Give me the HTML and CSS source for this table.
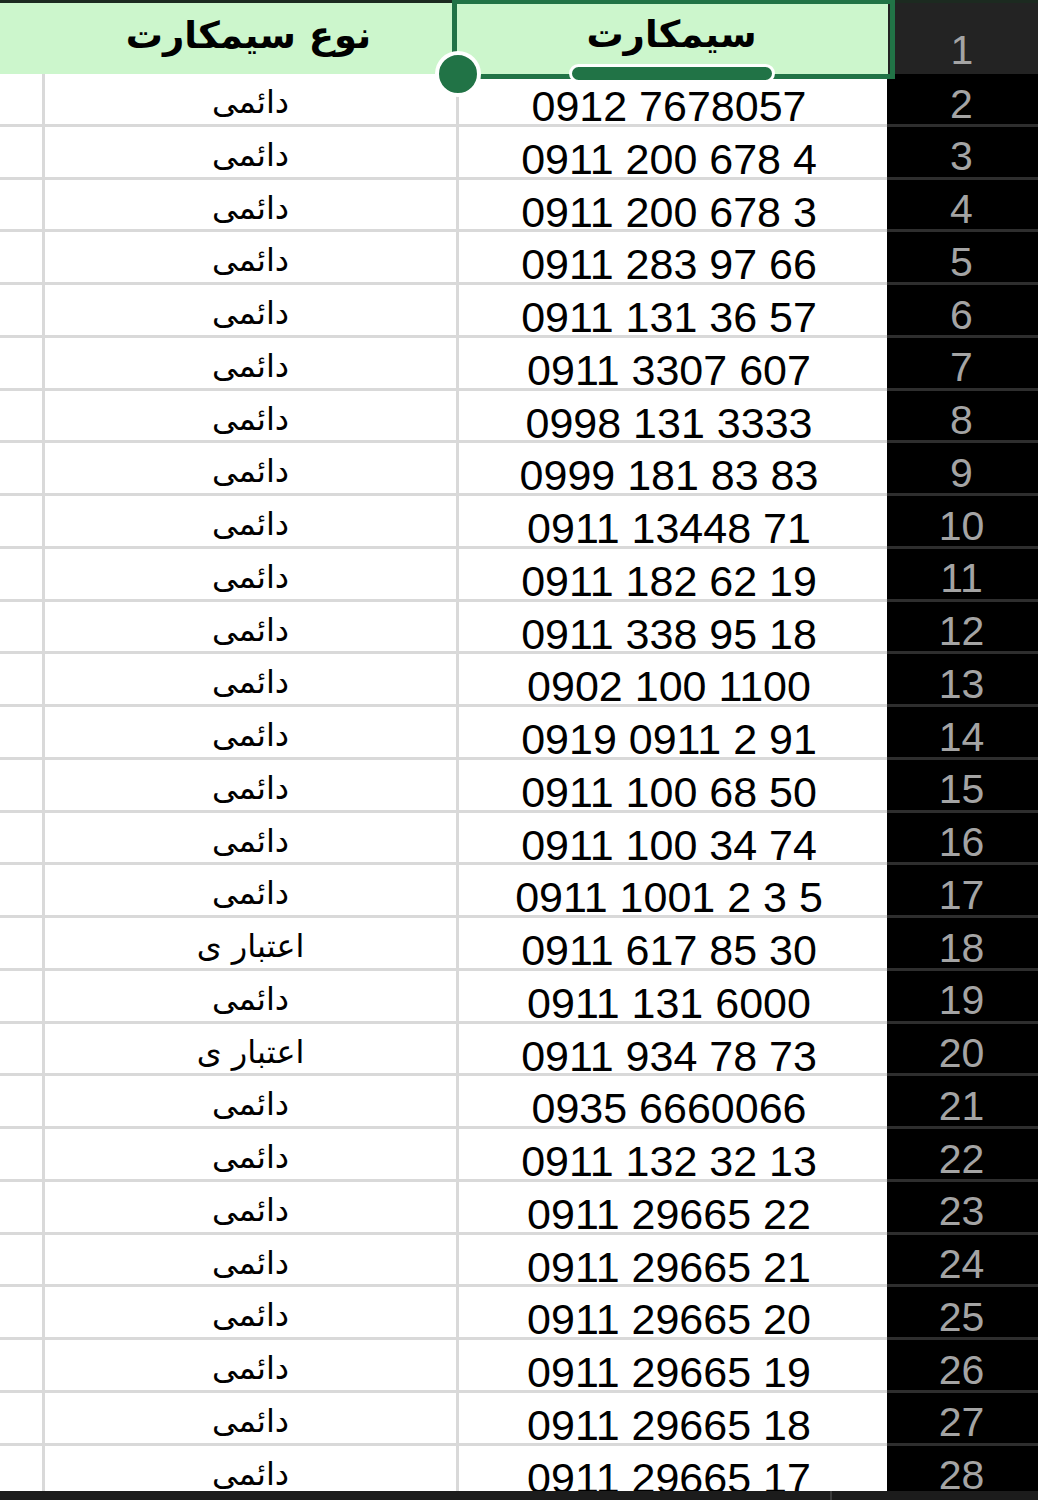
FILE: index.html
```html
<!DOCTYPE html>
<html lang="fa">
<head>
<meta charset="utf-8">
<link rel="stylesheet" href="styles.css">
</head>
<body>
<div class="sheet">
  <div class="hdr">
    <div class="hb"><span>نوع سیمکارت</span></div>
    <div class="ha"><span>سیمکارت</span></div>
    <div class="hn">1</div>
    <div class="sel"></div>
    <div class="dot"></div>
    <div class="pill"></div>
  </div>
  <div class="rows">
    <div class="row"><div class="c0"></div><div class="cb">دائمی</div><div class="ca">0912 7678057</div><div class="cn">2</div></div>
    <div class="row"><div class="c0"></div><div class="cb">دائمی</div><div class="ca">0911 200 678 4</div><div class="cn">3</div></div>
    <div class="row"><div class="c0"></div><div class="cb">دائمی</div><div class="ca">0911 200 678 3</div><div class="cn">4</div></div>
    <div class="row"><div class="c0"></div><div class="cb">دائمی</div><div class="ca">0911 283 97 66</div><div class="cn">5</div></div>
    <div class="row"><div class="c0"></div><div class="cb">دائمی</div><div class="ca">0911 131 36 57</div><div class="cn">6</div></div>
    <div class="row"><div class="c0"></div><div class="cb">دائمی</div><div class="ca">0911 3307 607</div><div class="cn">7</div></div>
    <div class="row"><div class="c0"></div><div class="cb">دائمی</div><div class="ca">0998 131 3333</div><div class="cn">8</div></div>
    <div class="row"><div class="c0"></div><div class="cb">دائمی</div><div class="ca">0999 181 83 83</div><div class="cn">9</div></div>
    <div class="row"><div class="c0"></div><div class="cb">دائمی</div><div class="ca">0911 13448 71</div><div class="cn">10</div></div>
    <div class="row"><div class="c0"></div><div class="cb">دائمی</div><div class="ca">0911 182 62 19</div><div class="cn">11</div></div>
    <div class="row"><div class="c0"></div><div class="cb">دائمی</div><div class="ca">0911 338 95 18</div><div class="cn">12</div></div>
    <div class="row"><div class="c0"></div><div class="cb">دائمی</div><div class="ca">0902 100 1100</div><div class="cn">13</div></div>
    <div class="row"><div class="c0"></div><div class="cb">دائمی</div><div class="ca">0919 0911 2 91</div><div class="cn">14</div></div>
    <div class="row"><div class="c0"></div><div class="cb">دائمی</div><div class="ca">0911 100 68 50</div><div class="cn">15</div></div>
    <div class="row"><div class="c0"></div><div class="cb">دائمی</div><div class="ca">0911 100 34 74</div><div class="cn">16</div></div>
    <div class="row"><div class="c0"></div><div class="cb">دائمی</div><div class="ca">0911 1001 2 3 5</div><div class="cn">17</div></div>
    <div class="row"><div class="c0"></div><div class="cb">اعتبار ی</div><div class="ca">0911 617 85 30</div><div class="cn">18</div></div>
    <div class="row"><div class="c0"></div><div class="cb">دائمی</div><div class="ca">0911 131 6000</div><div class="cn">19</div></div>
    <div class="row"><div class="c0"></div><div class="cb">اعتبار ی</div><div class="ca">0911 934 78 73</div><div class="cn">20</div></div>
    <div class="row"><div class="c0"></div><div class="cb">دائمی</div><div class="ca">0935 6660066</div><div class="cn">21</div></div>
    <div class="row"><div class="c0"></div><div class="cb">دائمی</div><div class="ca">0911 132 32 13</div><div class="cn">22</div></div>
    <div class="row"><div class="c0"></div><div class="cb">دائمی</div><div class="ca">0911 29665 22</div><div class="cn">23</div></div>
    <div class="row"><div class="c0"></div><div class="cb">دائمی</div><div class="ca">0911 29665 21</div><div class="cn">24</div></div>
    <div class="row"><div class="c0"></div><div class="cb">دائمی</div><div class="ca">0911 29665 20</div><div class="cn">25</div></div>
    <div class="row"><div class="c0"></div><div class="cb">دائمی</div><div class="ca">0911 29665 19</div><div class="cn">26</div></div>
    <div class="row"><div class="c0"></div><div class="cb">دائمی</div><div class="ca">0911 29665 18</div><div class="cn">27</div></div>
    <div class="row"><div class="c0"></div><div class="cb">دائمی</div><div class="ca">0911 29665 17</div><div class="cn">28</div></div>
  </div>
  <div class="bar"><div class="bar-l"></div><div class="bar-r"></div></div>
</div>
</body>
</html>
```
FILE: styles.css
```css
html, body {
  margin: 0;
  padding: 0;
  background: #ffffff;
}
body {
  width: 1038px;
  height: 1500px;
  overflow: hidden;
  font-family: "Liberation Sans", Arial, sans-serif;
}
.sheet {
  width: 1038px;
  height: 1500px;
  display: flex;
  flex-direction: column;
}
.hdr {
  position: relative;
  height: 74px;
  flex: none;
  display: flex;
  border-top: 3px solid #1c2a20;
  box-sizing: border-box;
}
.hb, .ha {
  background: #ccf6cc;
  display: flex;
  justify-content: center;
  align-items: center;
  font-family: "DejaVu Sans", sans-serif;
  font-weight: bold;
  font-size: 37px;
  color: #000;
  direction: rtl;
}
.hb {
  width: 455px;
  padding-left: 42px;
  box-sizing: border-box;
  padding-bottom: 6px;
}
.ha {
  width: 433px;
  padding-bottom: 8px;
  box-sizing: border-box;
}
.hn {
  flex: 1;
  background: #232323;
  color: #a4a4a4;
  font-size: 41px;
  text-align: center;
  line-height: 41px;
  padding-top: 27px;
  box-sizing: border-box;
  padding-right: 2px;
}
.sel {
  position: absolute;
  left: 452px;
  top: -3px;
  width: 443px;
  height: 79px;
  border: 5px solid #217346;
  border-top-width: 4px;
  box-sizing: border-box;
}
.dot {
  position: absolute;
  left: 435px;
  top: 48px;
  width: 38px;
  height: 38px;
  border-radius: 50%;
  background: #217346;
  border: 4px solid #ffffff;
}
.pill {
  position: absolute;
  left: 569px;
  top: 61px;
  width: 200px;
  height: 13px;
  border-radius: 10px;
  background: #217346;
  border: 3px solid #ffffff;
}
.rows {
  height: 1417px;
  flex: none;
  overflow: hidden;
  display: flex;
  flex-direction: column;
}
.row {
  display: flex;
  height: 52.76px;
  flex: none;
}
.c0, .cb, .ca, .cn {
  box-sizing: border-box;
  height: 100%;
  text-align: center;
  white-space: nowrap;
}
.c0 {
  width: 45px;
  border-right: 3px solid #d9d9d9;
  border-bottom: 3px solid #d9d9d9;
}
.cb {
  width: 414px;
  overflow: hidden;
  border-right: 3px solid #d9d9d9;
  border-bottom: 3px solid #d9d9d9;
  font-family: "DejaVu Sans", sans-serif;
  font-size: 32px;
  line-height: 32px;
  padding-top: 12px;
  direction: rtl;
  color: #000;
}
.ca {
  width: 428px;
  border-bottom: 3px solid #d9d9d9;
  font-size: 43px;
  line-height: 36px;
  padding-top: 14px;
  padding-right: 8px;
  color: #000;
}
.cn {
  flex: 1;
  background: #000;
  border-bottom: 3px solid #2e2e2e;
  color: #a4a4a4;
  font-size: 41px;
  line-height: 34px;
  padding-top: 12.5px;
  padding-right: 2px;
}
.bar {
  flex: 1;
  display: flex;
  background: #1c1c1c;
}
.bar-l {
  width: 830px;
  border-right: 2px solid #3c3c3c;
}
.bar-r {
  flex: 1;
}
```
